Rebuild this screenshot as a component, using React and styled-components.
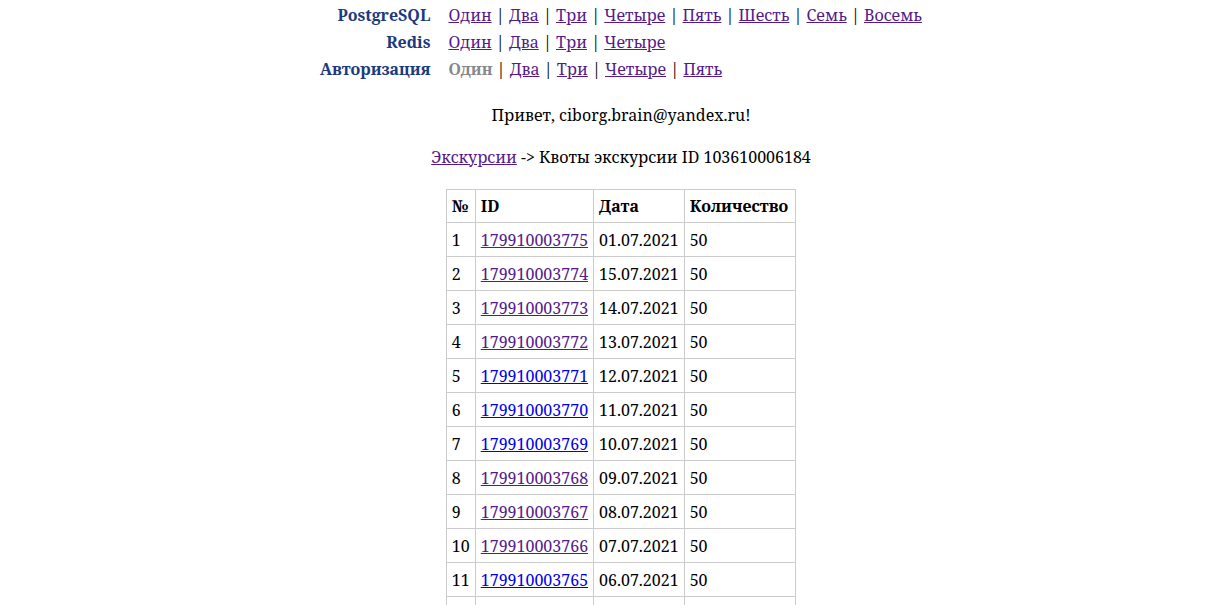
import React from 'react'
import styled, { createGlobalStyle } from 'styled-components'

const GlobalStyle = createGlobalStyle`
  body {
    margin: 0;
    background: #fff;
    color: #000;
    font-family: "Noto Serif", "DejaVu Serif", serif;
    font-size: 16px;
  }
  a { color: #551a8b; }
  a.fresh { color: #0000ee; }
`

const Page = styled.div`
  display: flex;
  flex-direction: column;
  align-items: center;
  padding: 1px 0 0 10px;
`

const Nav = styled.table`
  border-collapse: separate;
  border-spacing: 0;
`

const NavLabel = styled.th`
  text-align: right;
  color: #1c3a7e;
  font-weight: bold;
  padding: 2px 18px 2px 0;
  height: 23px;
`

const NavLinks = styled.td`
  text-align: left;
  padding: 2px 0;
`

const Current = styled.b`
  color: #888;
`

const Greeting = styled.p`
  margin: 22px 0 0;
  text-align: center;
`

const Crumbs = styled.p`
  margin: 20px 0 0;
  text-align: center;
`

const Grid = styled.table`
  margin-top: 21px;
  border-collapse: collapse;
`

const Head = styled.th`
  border: 1px solid #ccc;
  padding: 5px ${p => (p.$wide ? '7px' : '5px')} 5px 5px;
  text-align: left;
`

const Cell = styled.td`
  border: 1px solid #ccc;
  padding: 5px 5px;
  height: 23px;
`

const navRows = [
  { label: 'PostgreSQL', items: ['Один', 'Два', 'Три', 'Четыре', 'Пять', 'Шесть', 'Семь', 'Восемь'] },
  { label: 'Redis', items: ['Один', 'Два', 'Три', 'Четыре'] },
  { label: 'Авторизация', items: ['Один', 'Два', 'Три', 'Четыре', 'Пять'], current: 0 },
]

const dates = ['01.07.2021', '15.07.2021', '14.07.2021', '13.07.2021', '12.07.2021', '11.07.2021',
  '10.07.2021', '09.07.2021', '08.07.2021', '07.07.2021', '06.07.2021', '05.07.2021']
const fresh = [5, 6, 7, 11, 12]

const App = () => {
  return (
    <>
      <GlobalStyle />
      <Page>
        <Nav>
          <tbody>
            {navRows.map(row => (
              <tr key={row.label}>
                <NavLabel>{row.label}</NavLabel>
                <NavLinks>
                  {row.items.map((item, i) => (
                    <React.Fragment key={item}>
                      {i > 0 && ' | '}
                      {row.current === i ? <Current>{item}</Current> : <a href="#">{item}</a>}
                    </React.Fragment>
                  ))}
                </NavLinks>
              </tr>
            ))}
          </tbody>
        </Nav>
        <Greeting>Привет, ciborg.brain@yandex.ru!</Greeting>
        <Crumbs><a href="#">Экскурсии</a> -&gt; Квоты экскурсии ID 103610006184</Crumbs>
        <Grid>
          <thead>
            <tr>
              <Head>№</Head>
              <Head>ID</Head>
              <Head>Дата</Head>
              <Head $wide>Количество</Head>
            </tr>
          </thead>
          <tbody>
            {dates.map((d, i) => (
              <tr key={d}>
                <Cell>{i + 1}</Cell>
                <Cell>
                  <a href="#" className={fresh.includes(i + 1) ? 'fresh' : undefined}>{179910003775 - i}</a>
                </Cell>
                <Cell>{d}</Cell>
                <Cell>50</Cell>
              </tr>
            ))}
          </tbody>
        </Grid>
      </Page>
    </>
  )
}

export default App
